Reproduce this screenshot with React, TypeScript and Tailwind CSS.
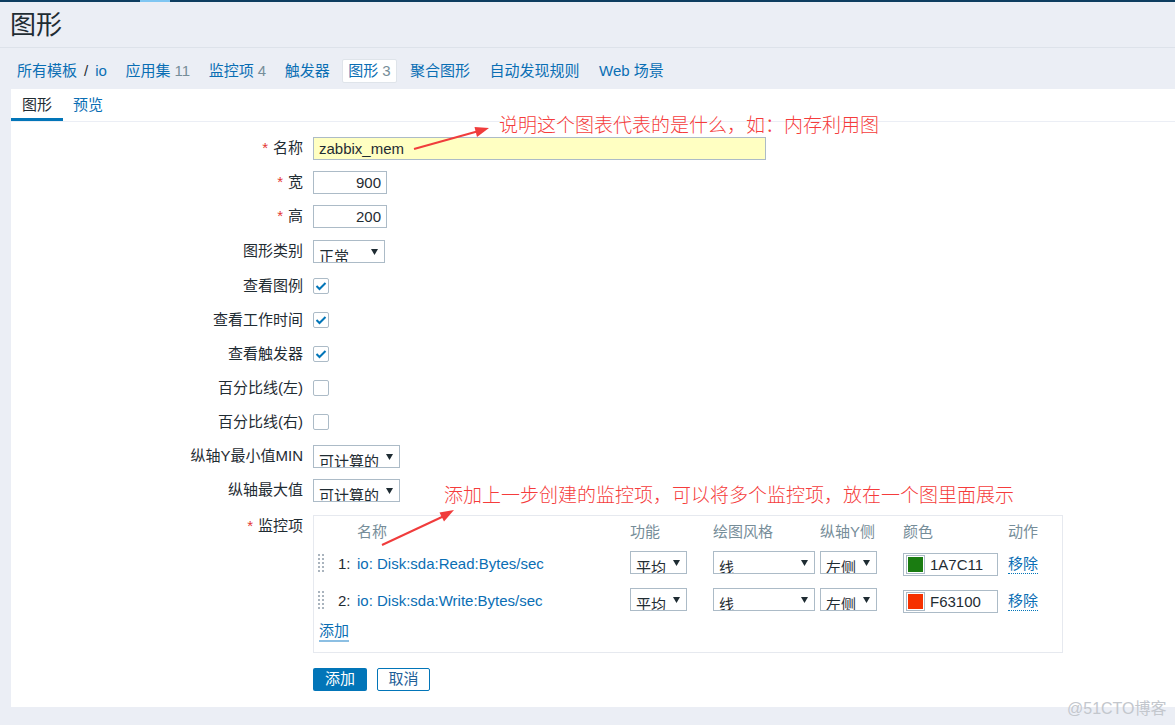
import React from 'react';

const LINK = 'text-[#0a6eb4]';

const Req = () => <span className="text-[#e33734] mr-[5px]">*</span>;

const Select = ({ width, text }: { width: string; text: string }) => (
  <div className={`relative h-[23px] ${width} border border-[#acbbc7] bg-white overflow-hidden`}>
    <div className="pl-[5px] pt-[7px] text-[15px] leading-[18px] text-[#1f2c33] whitespace-nowrap">{text}</div>
    <svg className="absolute right-[6px] top-[8px]" width="7" height="6" viewBox="0 0 7 6">
      <path d="M0 0 H7 L3.5 6 Z" fill="#1f2c33" />
    </svg>
  </div>
);

const Checkbox = ({ checked }: { checked?: boolean }) => (
  <div className="w-[16px] h-[16px] border border-[#acbbc7] rounded-[2px] bg-white flex items-center justify-center">
    {checked && (
      <svg width="12" height="10" viewBox="0 0 12 10">
        <path d="M1.5 5 L4.5 8 L10.5 2" stroke="#0275b8" strokeWidth="2" fill="none" />
      </svg>
    )}
  </div>
);

const Row = ({ label, req, h = 'h-[34px]', children }: { label: string; req?: boolean; h?: string; children: React.ReactNode }) => (
  <div className={`flex items-center ${h}`}>
    <div className="w-[292px] text-right text-[15px] text-[#1f2c33] whitespace-nowrap">
      {req && <Req />}
      {label}
    </div>
    <div className="ml-[10px] flex items-center">{children}</div>
  </div>
);

const Handle = () => (
  <svg width="8" height="18" viewBox="0 0 8 18">
    {[0, 4, 8, 12, 16].map((y) => (
      <g key={y}>
        <rect x="0" y={y} width="2" height="2" fill="#aab4be" />
        <rect x="4" y={y} width="2" height="2" fill="#aab4be" />
      </g>
    ))}
  </svg>
);

const items = [
  { n: '1:', name: 'io: Disk:sda:Read:Bytes/sec', color: '#1a7c11', hex: '1A7C11' },
  { n: '2:', name: 'io: Disk:sda:Write:Bytes/sec', color: '#f63100', hex: 'F63100' },
];

const cols = 'grid grid-cols-[20px_19px_273px_83px_107px_83px_105px_1fr] items-center';

export default function App() {
  return (
    <div className="relative w-full min-h-[725px] bg-[#ebeef5] font-['Liberation_Sans','Noto_Sans_CJK_SC',sans-serif] text-[#1f2c33] overflow-hidden">
      {/* top bar */}
      <div className="flex h-[2px]">
        <div className="w-[140px] bg-[#0d3d60]" />
        <div className="w-[30px] bg-[#7fc6f2]" />
        <div className="flex-1 bg-[#0d3d60]" />
      </div>

      {/* title */}
      <div className="h-[46px] flex items-center pl-[10px] border-b border-[#dde2ea]">
        <h1 className="text-[26px] leading-none">图形</h1>
      </div>

      {/* breadcrumb nav */}
      <div className="h-[41px] pt-[5px] flex items-center pl-[17px] gap-[18.5px] text-[15px] whitespace-nowrap">
        <div className="flex items-center gap-[7px]">
          <span className={LINK}>所有模板</span>
          <span className="text-[#1f2c33]">/</span>
          <span className={LINK}>io</span>
        </div>
        <span className={LINK}>
          应用集 <span className="text-[#768d99]">11</span>
        </span>
        <span className={LINK}>
          监控项 <span className="text-[#768d99]">4</span>
        </span>
        <span className={LINK}>触发器</span>
        <span className="-mx-[6px] px-[5px] h-[24px] flex items-center bg-white border border-[#dfe4ea] rounded-[2px]">
          <span className={LINK}>图形</span>
          <span className="text-[#768d99] ml-[4px]">3</span>
        </span>
        <span className={`${LINK} ml-[1px]`}>聚合图形</span>
        <span className={`${LINK} ml-[1px]`}>自动发现规则</span>
        <span className={`${LINK} ml-[1px]`}>Web 场景</span>
      </div>

      {/* main panel */}
      <div className="ml-[11px] bg-white pb-[16px]">
        <div className="h-[33px] flex items-end border-b border-[#ebeef5] text-[15px]">
          <div className="px-[11px] h-[32px] flex items-center border-b-[3px] border-[#0275b8] pt-[4px]">图形</div>
          <div className={`px-[10px] h-[32px] pt-[1px] flex items-center ${LINK}`}>预览</div>
        </div>

        <div className="pt-[9px]">
          <Row label="名称" req>
            <div className="w-[453px] h-[23px] border border-[#acbbc7] bg-[#ffffc2] px-[5px] text-[15px] leading-[21px]">
              zabbix_mem
            </div>
          </Row>
          <Row label="宽" req>
            <div className="w-[74px] h-[23px] border border-[#acbbc7] px-[5px] text-right text-[15px] leading-[21px]">900</div>
          </Row>
          <Row label="高" req>
            <div className="w-[74px] h-[23px] border border-[#acbbc7] px-[5px] text-right text-[15px] leading-[21px]">200</div>
          </Row>
          <Row label="图形类别" h="h-[36px]">
            <Select width="w-[72px]" text="正常" />
          </Row>
          <Row label="查看图例">
            <Checkbox checked />
          </Row>
          <Row label="查看工作时间">
            <Checkbox checked />
          </Row>
          <Row label="查看触发器">
            <Checkbox checked />
          </Row>
          <Row label="百分比线(左)">
            <Checkbox />
          </Row>
          <Row label="百分比线(右)">
            <Checkbox />
          </Row>
          <Row label="纵轴Y最小值MIN">
            <Select width="w-[87px]" text="可计算的" />
          </Row>
          <Row label="纵轴最大值" h="h-[35px]">
            <Select width="w-[87px]" text="可计算的" />
          </Row>

          {/* items table */}
          <div className="flex items-start mt-[7px]">
            <div className="w-[292px] text-right text-[15px] leading-[22px] whitespace-nowrap">
              <Req />
              监控项
            </div>
            <div className="ml-[10px] w-[750px] border border-[#e6e9ef] pt-[4px] pb-[6px] pl-[4px] text-[15px]">
              <div className={`${cols} h-[24px] text-[#768d99]`}>
                <span />
                <span />
                <span>名称</span>
                <span>功能</span>
                <span>绘图风格</span>
                <span>纵轴Y侧</span>
                <span>颜色</span>
                <span>动作</span>
              </div>
              {items.map((it) => (
                <div key={it.n} className={`${cols} h-[37px]`}>
                  <div className="pt-[1px]">
                    <Handle />
                  </div>
                  <span className="pt-[4px]">{it.n}</span>
                  <span className={`${LINK} whitespace-nowrap pt-[4px]`}>{it.name}</span>
                  <Select width="w-[57px]" text="平均" />
                  <Select width="w-[102px]" text="线" />
                  <Select width="w-[57px]" text="左侧" />
                  <div className="w-[95px] h-[23px] border border-[#acbbc7] flex items-center mt-[4px]">
                    <div className="w-[19px] h-[19px] ml-[2px] border border-[#acbbc7] p-[1px]">
                      <div className="w-full h-full" style={{ backgroundColor: it.color }} />
                    </div>
                    <span className="ml-[5px] leading-none">{it.hex}</span>
                  </div>
                  <span className={`${LINK} border-b border-dotted border-[#0275b8] justify-self-start leading-[18px] mt-[4px]`}>移除</span>
                </div>
              ))}
              <div className="h-[28px] flex items-center ml-[1px]">
                <span className={`${LINK} border-b-2 border-[#8cbfe3] leading-[18px]`}>添加</span>
              </div>
            </div>
          </div>

          {/* buttons */}
          <div className="flex gap-[10px] ml-[302px] mt-[15px]">
            <div className="w-[54px] h-[23px] bg-[#0275b8] text-white text-[15px] rounded-[2px] flex items-center justify-center">添加</div>
            <div className="w-[53px] h-[23px] border border-[#0275b8] text-[#1f5f99] text-[15px] rounded-[2px] flex items-center justify-center">取消</div>
          </div>
        </div>
      </div>

      {/* annotations */}
      <div className="absolute left-[499px] top-[114px] text-[19px] leading-[20px] text-[#f53c3c] whitespace-nowrap font-['Noto_Sans_CJK_SC',sans-serif] font-light">
        说明这个图表代表的是什么，如：内存利用图
      </div>
      <div className="absolute left-[444px] top-[484px] text-[19px] leading-[20px] text-[#f53c3c] whitespace-nowrap font-['Noto_Sans_CJK_SC',sans-serif] font-light">
        添加上一步创建的监控项，可以将多个监控项，放在一个图里面展示
      </div>
      <svg className="absolute left-0 top-0 pointer-events-none" width="1175" height="725">
        <line x1="414" y1="149" x2="477" y2="131.5" stroke="#f03c3c" strokeWidth="2" />
        <polygon points="489,128 477,137 474.5,127" fill="#f03c3c" />
        <line x1="382" y1="545" x2="443" y2="516.5" stroke="#f03c3c" strokeWidth="2" />
        <polygon points="454,510 444,521.5 439.5,512.5" fill="#f03c3c" />
      </svg>

      {/* watermark */}
      <div className="absolute left-[1067px] top-[697px] text-[16px] text-[#c3c7cd] whitespace-nowrap">@51CTO博客</div>
    </div>
  );
}
